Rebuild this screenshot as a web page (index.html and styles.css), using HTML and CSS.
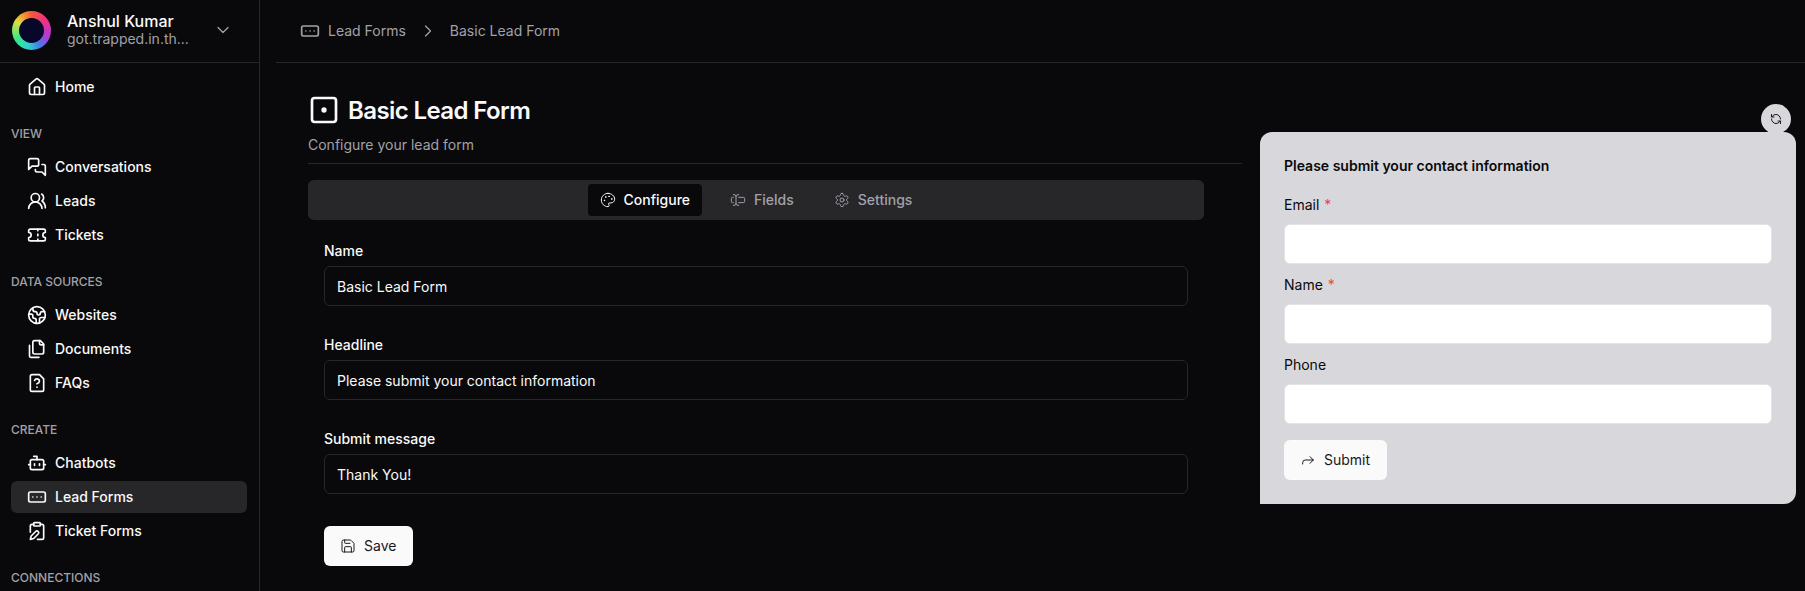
FILE: index.html
```html
<!DOCTYPE html>
<html>
<head>
  <title>Basic Lead Form</title>
  <link rel="stylesheet" href="styles.css">
</head>
<body>
  <aside class="sidebar">
    <div class="account">
      <div class="logo"><div class="logoInner"></div></div>
      <div class="accountText">
        <div class="accountName">Anshul Kumar</div>
        <div class="accountMail">got.trapped.in.th...</div>
      </div>
      <svg class="icon chevron" viewBox="0 0 24 24"><path d="m6 9 6 6 6-6"/></svg>
    </div>

    <nav class="nav">
      <a class="navItem">
        <svg class="icon" viewBox="0 0 24 24"><path d="M15 21v-8a1 1 0 0 0-1-1h-4a1 1 0 0 0-1 1v8"/><path d="M3 10a2 2 0 0 1 .709-1.528l7-5.999a2 2 0 0 1 2.582 0l7 5.999A2 2 0 0 1 21 10v9a2 2 0 0 1-2 2H5a2 2 0 0 1-2-2z"/></svg>
        Home
      </a>

      <div class="navLabel">VIEW</div>
      <a class="navItem">
        <svg class="icon" viewBox="0 0 24 24"><path d="M14 9a2 2 0 0 1-2 2H6l-4 4V4c0-1.1.9-2 2-2h8a2 2 0 0 1 2 2z"/><path d="M18 9h2a2 2 0 0 1 2 2v11l-4-4h-6a2 2 0 0 1-2-2v-1"/></svg>
        Conversations
      </a>
      <a class="navItem">
        <svg class="icon" viewBox="0 0 24 24"><path d="M18 21a8 8 0 0 0-16 0"/><circle cx="10" cy="8" r="5"/><path d="M22 20c0-3.37-2-6.5-4-8a5 5 0 0 0-.45-8.3"/></svg>
        Leads
      </a>
      <a class="navItem">
        <svg class="icon" viewBox="0 0 24 24"><path d="M2 9a3 3 0 0 1 0 6v2a2 2 0 0 0 2 2h16a2 2 0 0 0 2-2v-2a3 3 0 0 1 0-6V7a2 2 0 0 0-2-2H4a2 2 0 0 0-2 2Z"/><path d="M13 5v2"/><path d="M13 17v2"/><path d="M13 11v2"/></svg>
        Tickets
      </a>

      <div class="navLabel">DATA SOURCES</div>
      <a class="navItem">
        <svg class="icon" viewBox="0 0 24 24"><path d="M21.54 15H17a2 2 0 0 0-2 2v4.54"/><path d="M7 3.34V5a3 3 0 0 0 3 3a2 2 0 0 1 2 2c0 1.1.9 2 2 2a2 2 0 0 0 2-2c0-1.1.9-2 2-2h3.17"/><path d="M11 21.95V18a2 2 0 0 0-2-2a2 2 0 0 1-2-2v-1a2 2 0 0 0-2-2H2.05"/><circle cx="12" cy="12" r="10"/></svg>
        Websites
      </a>
      <a class="navItem">
        <svg class="icon" viewBox="0 0 24 24"><path d="M20 7h-3a2 2 0 0 1-2-2V2"/><path d="M9 18a2 2 0 0 1-2-2V4a2 2 0 0 1 2-2h7l4 4v10a2 2 0 0 1-2 2Z"/><path d="M3 7.6v12.8A1.6 1.6 0 0 0 4.6 22h9.8"/></svg>
        Documents
      </a>
      <a class="navItem">
        <svg class="icon" viewBox="0 0 24 24"><path d="M12 17h.01"/><path d="M15 2H6a2 2 0 0 0-2 2v16a2 2 0 0 0 2 2h12a2 2 0 0 0 2-2V7z"/><path d="M9.1 9a3 3 0 0 1 5.82 1c0 2-3 3-3 3"/></svg>
        FAQs
      </a>

      <div class="navLabel">CREATE</div>
      <a class="navItem">
        <svg class="icon" viewBox="0 0 24 24"><path d="M12 8V4H8"/><rect width="16" height="12" x="4" y="8" rx="2"/><path d="M2 14h2"/><path d="M20 14h2"/><path d="M15 13v2"/><path d="M9 13v2"/></svg>
        Chatbots
      </a>
      <a class="navItem active">
        <svg class="icon" viewBox="0 0 24 24"><rect width="20" height="12" x="2" y="6" rx="2"/><path d="M12 12h.01"/><path d="M17 12h.01"/><path d="M7 12h.01"/></svg>
        Lead Forms
      </a>
      <a class="navItem">
        <svg class="icon" viewBox="0 0 24 24"><rect width="8" height="4" x="8" y="2" rx="1"/><path d="M10.4 12.6a2 2 0 0 1 3 3L8 21l-4 1 1-4Z"/><path d="M16 4h2a2 2 0 0 1 2 2v14a2 2 0 0 1-2 2h-5.5"/><path d="M4 13.5V6a2 2 0 0 1 2-2h2"/></svg>
        Ticket Forms
      </a>

      <div class="navLabel">CONNECTIONS</div>
    </nav>
  </aside>

  <div class="main">
    <header class="topbar">
      <svg class="icon crumbIcon" viewBox="0 0 24 24"><rect width="20" height="12" x="2" y="6" rx="2"/><path d="M12 12h.01"/><path d="M17 12h.01"/><path d="M7 12h.01"/></svg>
      <span>Lead Forms</span>
      <svg class="icon crumbSep" viewBox="0 0 24 24"><path d="m9 18 6-6-6-6"/></svg>
      <span>Basic Lead Form</span>
    </header>

    <div class="content">
      <section class="editor">
        <div class="titleRow">
          <svg class="icon titleIcon" viewBox="0 0 24 24"><rect width="18" height="18" x="3" y="3" rx="2"/><circle cx="12" cy="12" r="1"/></svg>
          <h1>Basic Lead Form</h1>
        </div>
        <p class="subtitle">Configure your lead form</p>
        <hr class="divider">

        <div class="tabs">
          <div class="tab current">
            <svg class="icon" viewBox="0 0 24 24"><circle cx="13.5" cy="6.5" r=".5"/><circle cx="17.5" cy="10.5" r=".5"/><circle cx="8.5" cy="7.5" r=".5"/><circle cx="6.5" cy="12.5" r=".5"/><path d="M12 2C6.5 2 2 6.5 2 12s4.5 10 10 10c.926 0 1.648-.746 1.648-1.688 0-.437-.18-.835-.437-1.125-.29-.289-.438-.652-.438-1.125a1.64 1.64 0 0 1 1.668-1.668h1.996c3.051 0 5.555-2.503 5.555-5.554C21.965 6.012 17.461 2 12 2z"/></svg>
            Configure
          </div>
          <div class="tab">
            <svg class="icon" viewBox="0 0 24 24"><path d="M5 4h1a3 3 0 0 1 3 3 3 3 0 0 1 3-3h1"/><path d="M13 20h-1a3 3 0 0 1-3-3 3 3 0 0 1-3 3H5"/><path d="M5 16H4a2 2 0 0 1-2-2v-4a2 2 0 0 1 2-2h1"/><path d="M13 8h7a2 2 0 0 1 2 2v4a2 2 0 0 1-2 2h-7"/><path d="M9 7v10"/></svg>
            Fields
          </div>
          <div class="tab">
            <svg class="icon" viewBox="0 0 24 24"><path d="M12.22 2h-.44a2 2 0 0 0-2 2v.18a2 2 0 0 1-1 1.73l-.43.25a2 2 0 0 1-2 0l-.15-.08a2 2 0 0 0-2.73.73l-.22.38a2 2 0 0 0 .73 2.73l.15.1a2 2 0 0 1 1 1.72v.51a2 2 0 0 1-1 1.74l-.15.09a2 2 0 0 0-.73 2.73l.22.38a2 2 0 0 0 2.73.73l.15-.08a2 2 0 0 1 2 0l.43.25a2 2 0 0 1 1 1.73V20a2 2 0 0 0 2 2h.44a2 2 0 0 0 2-2v-.18a2 2 0 0 1 1-1.73l.43-.25a2 2 0 0 1 2 0l.15.08a2 2 0 0 0 2.73-.73l.22-.39a2 2 0 0 0-.73-2.73l-.15-.08a2 2 0 0 1-1-1.74v-.5a2 2 0 0 1 1-1.74l.15-.09a2 2 0 0 0 .73-2.73l-.22-.38a2 2 0 0 0-2.73-.73l-.15.08a2 2 0 0 1-2 0l-.43-.25a2 2 0 0 1-1-1.73V4a2 2 0 0 0-2-2z"/><circle cx="12" cy="12" r="3"/></svg>
            Settings
          </div>
        </div>

        <form class="form">
          <label class="field">
            <span class="fieldLabel">Name</span>
            <input class="textInput" type="text" value="Basic Lead Form">
          </label>
          <label class="field">
            <span class="fieldLabel">Headline</span>
            <input class="textInput" type="text" value="Please submit your contact information">
          </label>
          <label class="field">
            <span class="fieldLabel">Submit message</span>
            <input class="textInput" type="text" value="Thank You!">
          </label>
          <button class="button saveButton" type="button">
            <svg class="icon" viewBox="0 0 24 24"><path d="M15.2 3a2 2 0 0 1 1.4.6l3.8 3.8a2 2 0 0 1 .6 1.4V19a2 2 0 0 1-2 2H5a2 2 0 0 1-2-2V5a2 2 0 0 1 2-2z"/><path d="M17 21v-7a1 1 0 0 0-1-1H8a1 1 0 0 0-1 1v7"/><path d="M7 3v4a1 1 0 0 0 1 1h7"/></svg>
            Save
          </button>
        </form>
      </section>

      <section class="preview">
        <div class="refresh">
          <svg class="icon" viewBox="0 0 24 24"><path d="M21 12a9 9 0 0 0-9-9 9.75 9.75 0 0 0-6.74 2.74L3 8"/><path d="M3 3v5h5"/><path d="M3 12a9 9 0 0 0 9 9 9.75 9.75 0 0 0 6.74-2.74L21 16"/><path d="M16 16h5v5"/></svg>
        </div>
        <div class="previewTitle">Please submit your contact information</div>
        <label class="previewField">
          <span>Email <i class="req">*</i></span>
          <input class="previewInput" type="text">
        </label>
        <label class="previewField">
          <span>Name <i class="req">*</i></span>
          <input class="previewInput" type="text">
        </label>
        <label class="previewField">
          <span>Phone</span>
          <input class="previewInput" type="text">
        </label>
        <button class="button submitButton" type="button">
          <svg class="icon" viewBox="0 0 24 24"><polyline points="15 17 20 12 15 7"/><path d="M4 18v-2a4 4 0 0 1 4-4h12"/></svg>
          Submit
        </button>
      </section>
    </div>
  </div>
</body>
</html>
```

FILE: styles.css
```css
* {
  box-sizing: border-box;
}

html, body {
  height: 100%;
}

body {
  margin: 0;
  display: flex;
  overflow: hidden;
  background-color: #09090b;
  color: #fafafa;
  font-family: Inter, "Liberation Sans", sans-serif;
  font-size: 14px;
  line-height: 20px;
}

.icon {
  width: 20px;
  height: 20px;
  flex: none;
  fill: none;
  stroke: currentColor;
  stroke-width: 2;
  stroke-linecap: round;
  stroke-linejoin: round;
}

/* sidebar */
.sidebar {
  width: 260px;
  flex: none;
  border-right: 1px solid #27272a;
}

.account {
  height: 63px;
  padding: 0 12px 2px;
  display: flex;
  align-items: center;
  border-bottom: 1px solid #27272a;
}

.logo {
  width: 39px;
  height: 39px;
  padding: 7px;
  border-radius: 50%;
  background: conic-gradient(#f5583c, #f0327e 50deg, #b03ad8 110deg, #4a7ae8 150deg, #30d0d0 190deg, #38e88c 240deg, #d8e040 300deg, #f59030 335deg, #f5583c);
}

.logoInner {
  width: 100%;
  height: 100%;
  border-radius: 50%;
  background-color: #07072a;
}

.accountText {
  margin-left: 16px;
  width: 138px;
}

.accountName {
  font-size: 16px;
  font-weight: 500;
  line-height: 18px;
}

.accountMail {
  color: #a1a1aa;
  line-height: 18px;
}

.chevron {
  margin-left: 8px;
  color: #a1a1aa;
  stroke-width: 1.5;
}

.nav {
  padding: 8px 12px 0 11px;
}

.navItem {
  height: 32px;
  margin-bottom: 2px;
  padding-left: 16px;
  display: flex;
  align-items: center;
  gap: 8px;
  border-radius: 6px;
  font-weight: 500;
}

.navItem.active {
  background-color: #27272a;
}

.navLabel {
  margin: 19px 0 5px;
  height: 24px;
  display: flex;
  align-items: center;
  color: #a1a1aa;
  font-size: 12px;
  font-weight: 500;
  line-height: 16px;
}

/* main */
.main {
  flex: 1;
  min-width: 0;
}

.topbar {
  height: 63px;
  margin-left: 16px;
  padding-left: 24px;
  display: flex;
  align-items: center;
  border-bottom: 1px solid #27272a;
  color: #a1a1aa;
}

.crumbIcon {
  margin-right: 8px;
}

.crumbSep {
  margin: 0 12px;
  stroke-width: 1.5;
}

.content {
  display: flex;
  align-items: flex-start;
  padding-left: 48px;
}

.editor {
  width: 934px;
  flex: none;
  padding-top: 31px;
}

.titleRow {
  display: flex;
  align-items: center;
  gap: 8px;
}

.titleIcon {
  width: 32px;
  height: 32px;
}

h1 {
  margin: 1px 0 -1px;
  font-size: 24px;
  font-weight: 600;
  line-height: 32px;
  letter-spacing: -0.6px;
}

.subtitle {
  margin: 9px 0 8px;
  color: #a1a1aa;
}

.divider {
  margin: 0 0 16px;
  border: 0;
  border-top: 1px solid #27272a;
}

.tabs {
  width: 896px;
  height: 40px;
  display: flex;
  justify-content: center;
  align-items: center;
  gap: 16px;
  border-radius: 6px;
  background-color: #27272a;
}

.tab {
  height: 32px;
  padding: 0 12px;
  display: flex;
  align-items: center;
  gap: 8px;
  border-radius: 4px;
  color: #a1a1aa;
  font-weight: 500;
}

.tab .icon {
  width: 16px;
  height: 16px;
  stroke-width: 1.5;
}

.tab.current {
  background-color: #09090b;
  color: #fafafa;
}

.form {
  width: 896px;
  padding: 21px 16px 0;
}

.field {
  display: block;
  margin-bottom: 29px;
}

.fieldLabel {
  display: block;
  margin-bottom: 5px;
  font-weight: 500;
}

.textInput {
  display: block;
  width: 100%;
  height: 40px;
  padding: 0 12px;
  border: 1px solid #27272a;
  border-radius: 6px;
  background-color: #09090b;
  color: #fafafa;
  font: inherit;
}

.button {
  height: 40px;
  display: flex;
  align-items: center;
  gap: 8px;
  padding: 0 17px 0 16px;
  border: 0;
  border-radius: 6px;
  background-color: #fafafa;
  color: #18181b;
  font: inherit;
}

.button .icon {
  width: 16px;
  height: 16px;
  stroke-width: 1.5;
}

.saveButton {
  margin-top: 32px;
}

/* preview */
.preview {
  position: relative;
  width: 536px;
  flex: none;
  margin: 69px 0 0 18px;
  padding: 24px;
  border-radius: 12px 12px 12px 0;
  background-color: #d8d8dc;
  color: #09090b;
}

.refresh {
  position: absolute;
  top: -28px;
  right: 5px;
  width: 30px;
  height: 30px;
  display: flex;
  align-items: center;
  justify-content: center;
  border-radius: 50%;
  background-color: #d8d8dc;
  color: #18181b;
}

.refresh .icon {
  width: 12px;
  height: 12px;
}

.previewTitle {
  margin-bottom: 19px;
  font-weight: 600;
}

.previewField {
  display: block;
  margin-bottom: 11px;
}

.previewField span {
  display: block;
  margin-bottom: 9px;
}

.req {
  color: #ef4444;
  font-style: normal;
  margin-left: 1px;
}

.previewInput {
  display: block;
  width: 100%;
  height: 40px;
  border: 1px solid #e4e4e7;
  border-radius: 6px;
  background-color: #fff;
}

.submitButton {
  margin-top: 16px;
}
```
